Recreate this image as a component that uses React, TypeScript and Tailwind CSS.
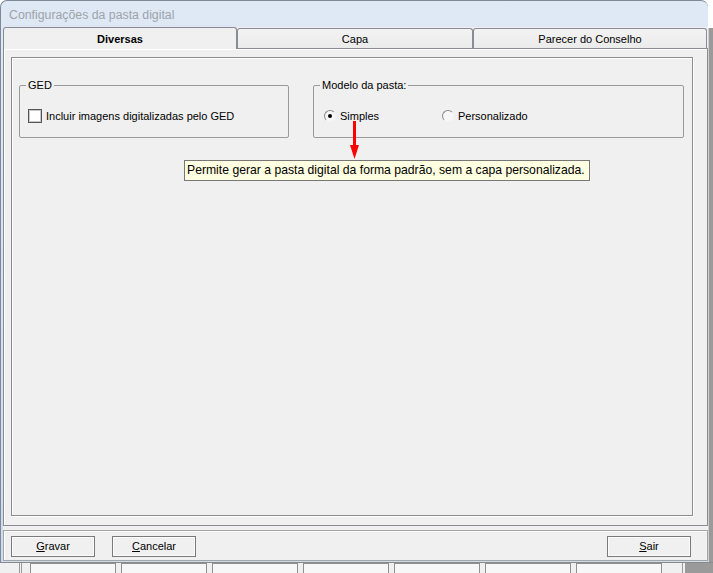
import React from 'react';

// Small mnemonic helper: underline first letter like a Win32 button
function MnemonicButton({ label, className = '' }: { label: string; className?: string }) {
  return (
    <button
      className={`h-[21px] w-[84px] border border-[#7a7a7a] bg-[#f0f0f0] shadow-[inset_0_0_0_1px_#fbfbfb] text-[11px] text-black ${className}`}
    >
      <span className="underline">{label[0]}</span>
      {label.slice(1)}
    </button>
  );
}

function Radio({ checked, label }: { checked?: boolean; label: string }) {
  return (
    <label className="flex items-center gap-[4px]">
      <span className="flex h-[12px] w-[12px] items-center justify-center rounded-full border border-t-[#8a8a8a] border-l-[#8a8a8a] border-b-[#f4f4f4] border-r-[#f4f4f4] bg-[#f7f7f7]">
        {checked && <span className="h-[4px] w-[4px] rounded-full bg-black" />}
      </span>
      <span>{label}</span>
    </label>
  );
}

export default function App() {
  const tabs = [
    { label: 'Diversas', width: 'w-[234px]', active: true },
    { label: 'Capa', width: 'w-[236px]', active: false },
    { label: 'Parecer do Conselho', width: 'w-[234px]', active: false },
  ];

  const cells = [
    'w-[86px]', 'w-[86px]', 'w-[86px]', 'w-[86px]', 'w-[86px]', 'w-[86px]', 'w-[86px]',
  ];

  return (
    <div className="relative flex h-[573px] w-[713px] flex-col overflow-hidden bg-white font-['Liberation_Sans',Arial,sans-serif] text-[11px] text-black">
      <div className="flex h-[562px]">
        {/* Window */}
        <div className="flex w-[708px] flex-col rounded-t-[7px] border-l border-t border-[#7d8998] bg-gradient-to-b from-[#dfe9f5] to-[#cddcee] pb-[1px] pl-[2px]">
          {/* Title bar */}
          <div className="flex h-[26px] items-center pl-[6px] pt-[3px] text-[12.3px] text-[#9ca3ab]">
            Configurações da pasta digital
          </div>

          {/* Client area */}
          <div className="flex flex-1 flex-col bg-[#f0f0f0]">
            {/* Tabs */}
            <div className="flex h-[21px] items-end">
              {tabs.map((t) =>
                t.active ? (
                  <div
                    key={t.label}
                    className={`relative z-10 -mb-[1px] flex h-[22px] ${t.width} items-center justify-center rounded-t-[3px] border border-b-0 border-[#898c95] bg-[#f0f0f0] pt-[2px] font-bold`}
                  >
                    {t.label}
                  </div>
                ) : (
                  <div
                    key={t.label}
                    className={`flex h-[20px] ${t.width} items-center justify-center rounded-t-[3px] border border-b-0 border-l-[#898c95] border-r-[#898c95] border-t-[#898c95] bg-gradient-to-b from-[#f3f3f3] to-[#ebebeb] pt-[1px]`}
                  >
                    {t.label}
                  </div>
                )
              )}
            </div>

            {/* Tab panel */}
            <div className="h-[478px] border border-[#898c95] pl-[7px] pt-[8px] shadow-[inset_1px_1px_0_#ffffff]">
              <div className="h-[459px] w-[682px] border border-[#8c8c8c] pl-[7px] pt-[20px] shadow-[1px_1px_0_#ffffff,inset_1px_1px_0_#ffffff]">
                <div className="flex gap-[24px]">
                  {/* GED */}
                  <fieldset className="h-[60px] w-[270px] rounded-[2px] border border-[#9a9a9a] pl-[6px] pt-[16px]">
                    <legend className="px-[2px] leading-[14px]">GED</legend>
                    <label className="flex items-center gap-[4px] pl-[2px]">
                      <span className="h-[14px] w-[14px] border border-[#555555] bg-white shadow-[inset_0_0_0_1px_#c8c8c8]" />
                      <span>Incluir imagens digitalizadas pelo GED</span>
                    </label>
                  </fieldset>

                  {/* Modelo da pasta */}
                  <fieldset className="h-[60px] w-[371px] rounded-[2px] border border-[#9a9a9a] pl-[6px] pt-[16px]">
                    <legend className="px-[2px] leading-[14px]">Modelo da pasta:</legend>
                    <div className="flex items-center pl-[4px]">
                      <div className="w-[118px]">
                        <Radio checked label="Simples" />
                      </div>
                      <Radio label="Personalizado" />
                    </div>
                  </fieldset>
                </div>
              </div>
            </div>

            {/* Button bar */}
            <div className="mt-[4px] flex h-[31px] items-start border border-[#a5a5a5] pl-[7px] pr-[16px] pt-[5px] shadow-[inset_1px_1px_0_#ffffff]">
              <MnemonicButton label="Gravar" />
              <MnemonicButton label="Cancelar" className="ml-[17px]" />
              <MnemonicButton label="Sair" className="ml-auto" />
            </div>
          </div>
        </div>

        {/* Right edge of the window frame */}
        <div className="mt-[28px] w-[5px] border-l border-[#cfcfcf] bg-[#9a9a9a]" />
      </div>

      {/* Window behind */}
      <div className="flex h-[11px] items-stretch border-t border-[#8a8a8a] bg-[#f0f0f0] pl-[19px]">
        <div className="w-[3px] border-l border-r border-[#9a9a9a]" />
        <div className="flex gap-[5px] pl-[8px]">
          {cells.map((w, i) => (
            <div key={i} className={`${w} border-l border-r border-t border-[#8f8f8f] bg-[#f7f7f7]`} />
          ))}
        </div>
        <div className="ml-[20px] w-[4px] border-l border-r border-[#9a9a9a]" />
        <div className="flex-1 bg-[#9a9a9a]" />
      </div>

      {/* Tooltip */}
      <div className="absolute left-[184px] top-[160px] flex h-[21px] w-[406px] items-center border border-[#767676] bg-[#ffffe1] px-[2px] text-[12.2px] text-black">
        Permite gerar a pasta digital da forma padrão, sem a capa personalizada.
      </div>

      {/* Red annotation arrow */}
      <svg className="absolute left-[348px] top-[120px]" width="14" height="40" viewBox="0 0 14 40">
        <line x1="6.5" y1="1" x2="6.5" y2="27" stroke="#ff0000" strokeWidth="3" />
        <polygon points="2,25 11,25 6.5,39" fill="#ff0000" />
      </svg>
    </div>
  );
}
